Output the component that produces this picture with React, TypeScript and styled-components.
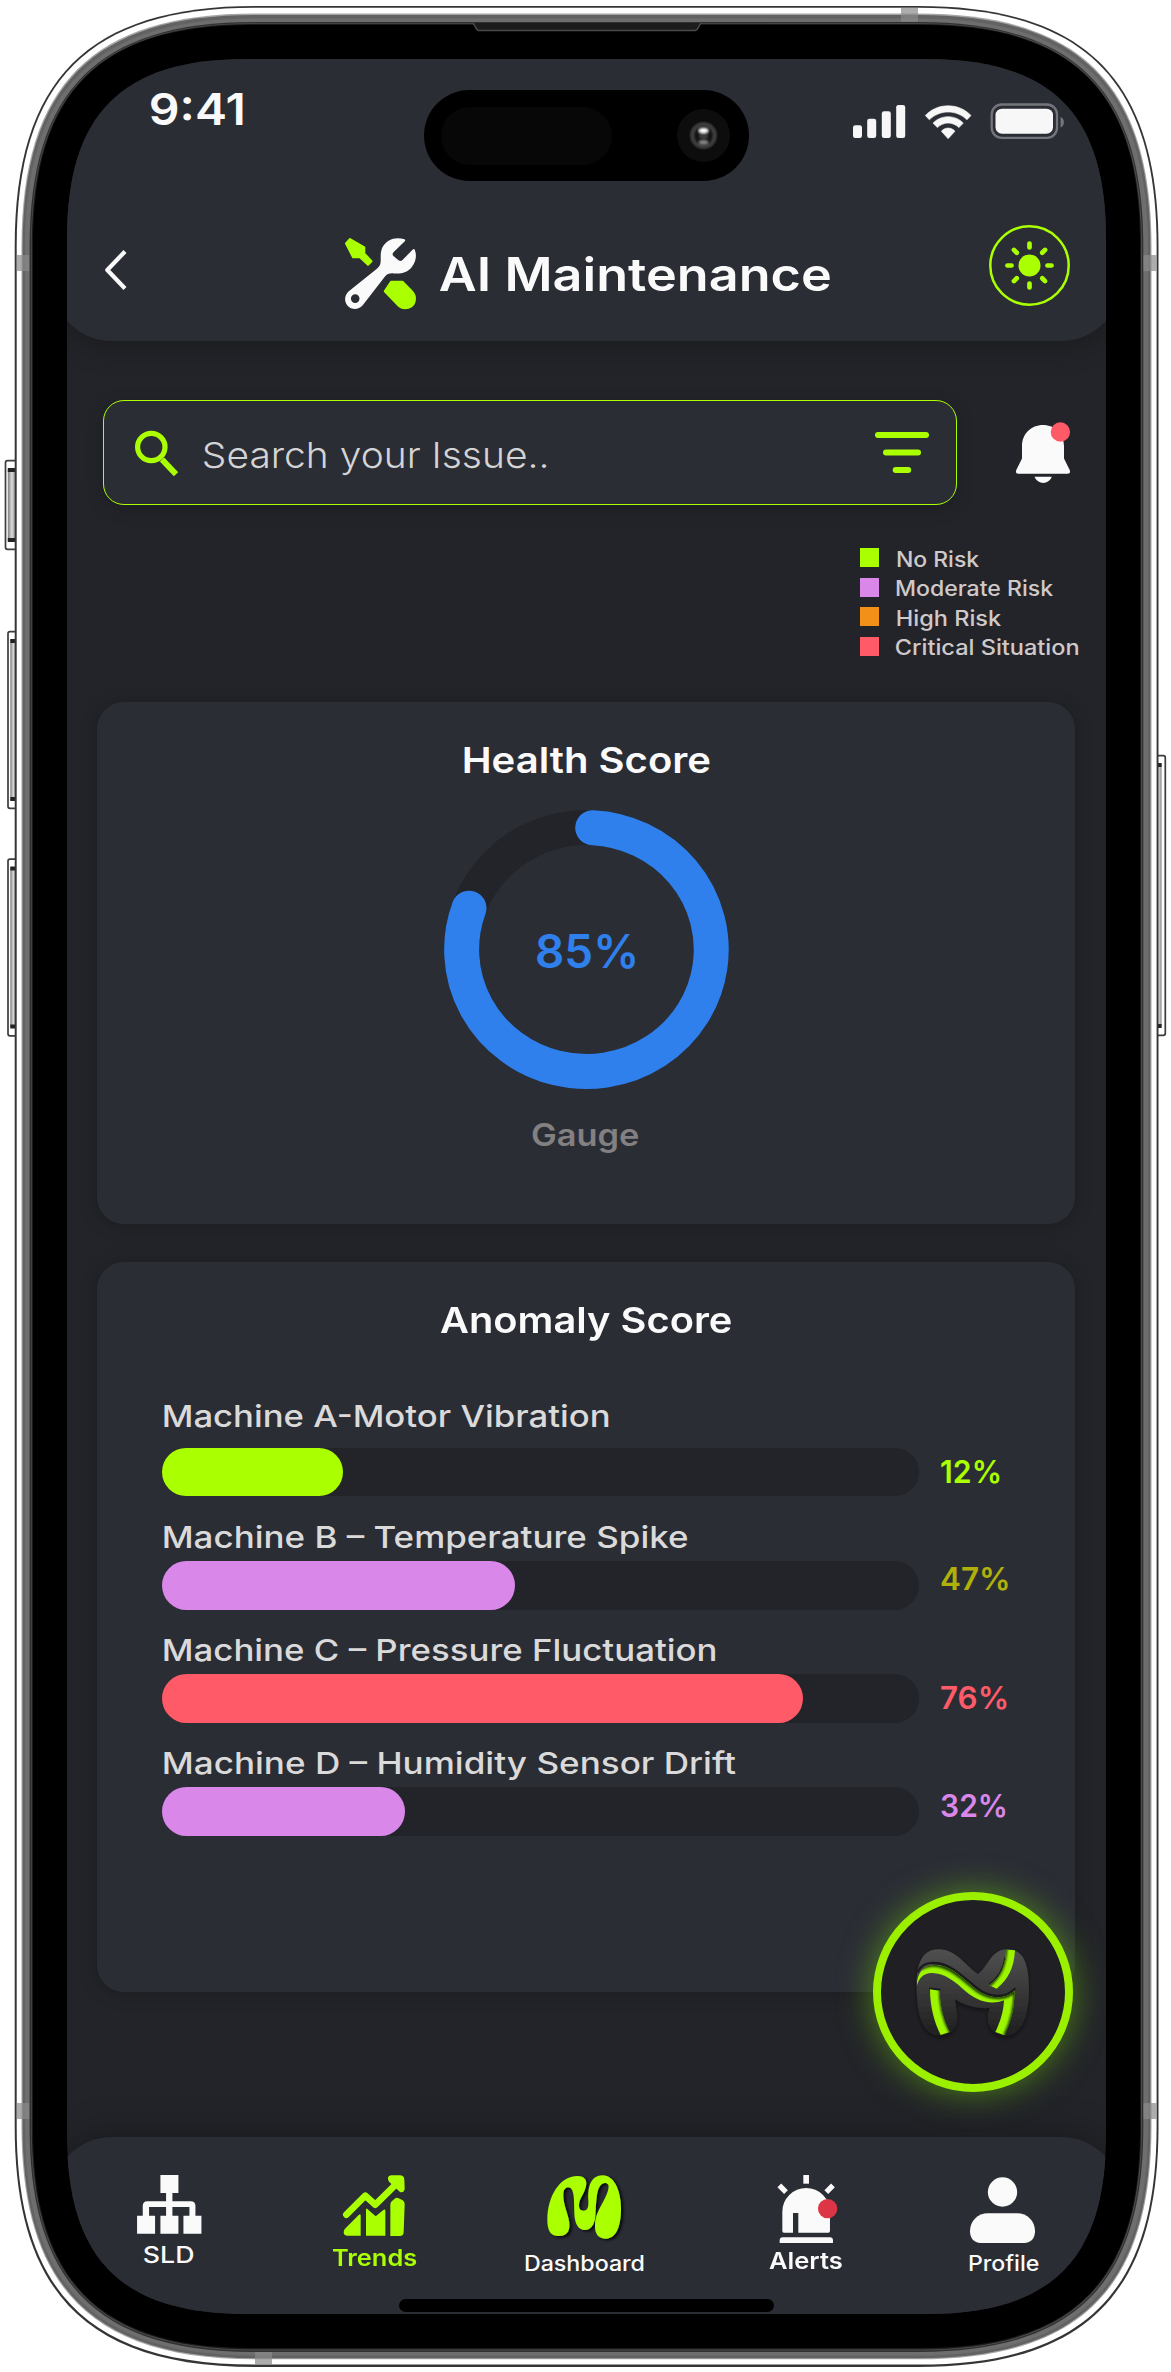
import React, { useLayoutEffect, useRef, useState } from "react";
import styled, { createGlobalStyle } from "styled-components";

const lime = "#aaff00";
const panel = "#2b2d35";
const ground = "#232429";
const paper = "#fafafa";
const coral = "#ff5a68";
const orchid = "#da87ea";

const GlobalStyle = createGlobalStyle`
  *, *::before, *::after { box-sizing: border-box; }
  body { margin: 0; background: #fff; font-family: Inter, "Liberation Sans", sans-serif; }
  svg { display: block; flex: none; overflow: visible; }
`;

/* Rounded rectangle with continuous (smoothed) corners. */
function smoothRect(x: number, y: number, r: number, b: number, radius: number) {
  const e = radius * 1.22;
  const c = radius * 0.373;
  return [
    `M${x + e},${y}`,
    `H${r - e}C${r - c},${y} ${r},${y + c} ${r},${y + e}`,
    `V${b - e}C${r},${b - c} ${r - c},${b} ${r - e},${b}`,
    `H${x + e}C${x + c},${b} ${x},${b - c} ${x},${b - e}`,
    `V${y + e}C${x},${y + c} ${x + c},${y} ${x + e},${y}Z`,
  ].join("");
}

/* ---------- text ---------- */

const TextBox = styled.span<{ $w: number; $size: number; $weight: number; $color: string; $lh: number }>`
  display: block;
  flex: none;
  width: ${(p) => p.$w}px;
  height: ${(p) => p.$lh}px;
  line-height: ${(p) => p.$lh}px;
  font-size: ${(p) => p.$size}px;
  font-weight: ${(p) => p.$weight};
  color: ${(p) => p.$color};
  white-space: nowrap;
`;

const TextRun = styled.span`
  display: inline-block;
  transform-origin: 0 50%;
`;

type TextProps = {
  children: string;
  w: number;
  size: number;
  weight?: number;
  color?: string;
  lh?: number;
};

/* Sets a line of text so that its ink spans exactly `w` pixels. */
function Text({ children, w, size, weight = 500, color = paper, lh = 40 }: TextProps) {
  const ref = useRef<HTMLSpanElement>(null);
  const [fit, setFit] = useState<{ shift: number; scale: number }>({ shift: 0, scale: 1 });
  useLayoutEffect(() => {
    const ctx = document.createElement("canvas").getContext("2d");
    if (!ref.current || !ctx) return;
    const cs = getComputedStyle(ref.current);
    ctx.font = `${cs.fontWeight} ${cs.fontSize} ${cs.fontFamily}`;
    const m = ctx.measureText(children);
    const scale = w / (m.actualBoundingBoxLeft + m.actualBoundingBoxRight);
    setFit({ shift: m.actualBoundingBoxLeft * scale, scale });
  }, [children, w, size, weight]);
  return (
    <TextBox $w={w} $size={size} $weight={weight} $color={color} $lh={lh}>
      <TextRun ref={ref} style={{ transform: `translateX(${fit.shift}px) scaleX(${fit.scale})` }}>
        {children}
      </TextRun>
    </TextBox>
  );
}

/* ---------- device ---------- */

const Device = styled.main`
  position: relative;
  width: 1171px;
  height: 2372px;
  padding: 59px 65px 0 67px;
  overflow: hidden;
  background: #fff;
`;

const Hardware = styled.svg`
  position: absolute;
  inset: 0;
`;

const Screen = styled.div`
  position: relative;
  display: flex;
  flex-direction: column;
  width: 1039px;
  height: 2255px;
  background: ${ground};
  clip-path: path("${smoothRect(0, 0, 1039, 2255, 147)}");
`;

const Island = styled.div`
  position: absolute;
  top: 31px;
  left: 356.5px;
  width: 325.5px;
  height: 91px;
  display: flex;
  align-items: center;
  justify-content: space-between;
  padding: 0 19px 0 17px;
  border-radius: 46px;
  background: #000;
`;

const Sensor = styled.div`
  width: 171px;
  height: 58px;
  border-radius: 29px;
  background: #070707;
`;

const HomeBar = styled.div`
  position: absolute;
  left: 332px;
  bottom: 1.8px;
  width: 375px;
  height: 13.5px;
  border-radius: 7px;
  background: #000;
`;

function SideButton({ x, y, w, h, flip }: { x: number; y: number; w: number; h: number; flip?: boolean }) {
  const keyX = flip ? x : x + 3;
  const keyW = w - 3;
  return (
    <g>
      <rect x={x + 0.7} y={y + 0.7} width={w} height={h - 1.4} rx="2" fill="#fff" stroke="#3c3c3c" strokeWidth="1.7" />
      <rect x={keyX} y={y + 9} width={keyW} height={h - 18} fill="url(#key)" />
      <rect x={keyX} y={y + 8} width={keyW} height="4" fill="#222" />
      <rect x={keyX} y={y + h - 12} width={keyW} height="4" fill="#222" />
    </g>
  );
}

function Frame() {
  return (
    <Hardware width="1171" height="2372" viewBox="0 0 1171 2372">
      <defs>
        <linearGradient id="key" x1="0" x2="1" y1="0" y2="0">
          <stop offset="0" stopColor="#7c7c7c" />
          <stop offset="0.5" stopColor="#dadada" />
          <stop offset="1" stopColor="#8a8a8a" />
        </linearGradient>
      </defs>
      <SideButton x={4.8} y={460} w={11} h={90} />
      <SideButton x={7.3} y={631} w={9} h={178} />
      <SideButton x={7.3} y={858.5} w={9} h={178} />
      <SideButton x={1155.6} y={755} w={9} h={281} flip />
      <path d={smoothRect(14.7, 6, 1158.5, 2367, 197)} fill="#343636" />
      <path d={smoothRect(16.7, 7.8, 1156.6, 2364.6, 195)} fill="#fff" />
      <path d={smoothRect(21.5, 13.6, 1151.5, 2359.3, 191)} fill="#a5a5a5" />
      <path d={smoothRect(22.6, 15, 1150.4, 2358.2, 190)} fill="#626262" />
      <path d={smoothRect(25, 18.5, 1148, 2355.5, 188)} fill="#6e6e6e" />
      <path d={smoothRect(29.6, 22, 1143.3, 2352, 184)} fill="#303030" />
      <path d={smoothRect(31, 23.2, 1142, 2350.4, 182)} fill="#4d4d4d" />
      <path d={smoothRect(31.8, 24, 1141, 2349.4, 181)} fill="#1b1b1b" />
      <path d={smoothRect(33, 25, 1140, 2348, 179)} fill="#000" />
      <g fill="#8a8a8a" fillOpacity="0.7">
        <rect x="16.7" y="255" width="12.5" height="16" />
        <rect x="1143.5" y="255" width="13" height="16" />
        <rect x="16.7" y="2103" width="12.5" height="16" />
        <rect x="1143.5" y="2103" width="13" height="16" />
        <rect x="901" y="7.8" width="17" height="14" />
        <rect x="255" y="2352" width="17" height="12.6" />
      </g>
      <path d="M472.500 23H701.500C698.500 24 699 30.500 695 30.500H479C475 30.500 475.500 24 472.500 23Z" fill="#1c1c1c" />
      <path d="M472.500 23C475.500 24 475 30.500 479 30.500H695C699 30.500 698.500 24 701.500 23" fill="none" stroke="#4a4a4a" strokeWidth="1.500" />
    </Hardware>
  );
}

const Camera = () => (
  <svg width="53" height="53" viewBox="-26.500 -26.500 53 53">
    <defs>
      <radialGradient id="lens">
        <stop offset="0" stopColor="#4a4a4a" />
        <stop offset="0.5" stopColor="#1a1a1a" />
        <stop offset="0.78" stopColor="#404040" />
        <stop offset="1" stopColor="#242424" />
      </radialGradient>
      <filter id="glint" x="-50%" y="-50%" width="200%" height="200%">
        <feGaussianBlur stdDeviation="0.900" />
      </filter>
    </defs>
    <circle r="26.500" fill="#0d0d0d" />
    <circle r="14" fill="url(#lens)" />
    <g filter="url(#glint)">
      <rect x="-7.500" y="-8" width="15" height="16.500" rx="7" fill="#111" />
      <circle r="4.500" fill="#3a3a3a" />
      <ellipse cy="-5" rx="4.500" ry="2.400" fill="#fff" />
      <ellipse cy="7" rx="4.500" ry="2" fill="#8a8a8a" />
    </g>
  </svg>
);

/* ---------- header ---------- */

const Header = styled.header`
  flex: none;
  height: 281.5px;
  margin: 0 -15px;
  border-radius: 0 0 60px 60px;
  background: ${panel};
  box-shadow: 0 4px 30px rgba(0, 0, 0, 0.28);
`;

const StatusRow = styled.div`
  display: flex;
  align-items: flex-start;
  height: 166px;
  padding: 30px 56px 0 99px;
`;

const StatusIcons = styled.div`
  display: flex;
  align-items: flex-start;
  margin: 14px 0 0 auto;
`;

const TitleRow = styled.div`
  display: flex;
  align-items: center;
  height: 81px;
  padding: 0 51px 0 53px;
`;

const Back = styled.div`
  padding-top: 8px;
`;

const Heading = styled.h1`
  display: flex;
  align-items: center;
  gap: 24px;
  margin: 16px auto 0 218px;
`;

const StatusGlyphs = () => (
  <svg width="212" height="36" viewBox="853 103 212 36" fill="#f7f7f7">
    <rect x="853" y="125.300" width="9" height="12.700" rx="2.300" />
    <rect x="867.200" y="118.700" width="9" height="19.300" rx="2.300" />
    <rect x="881.800" y="111.300" width="9" height="26.700" rx="2.300" />
    <rect x="896.200" y="105" width="9" height="33" rx="2.300" />
    <path d="M925.300 115.500C937.500 102.500 958.800 102.500 971 115.500L967 119.800C956.500 109.500 939.800 109.500 929.300 119.800ZM933 123C941.500 114.500 954.800 114.500 963.300 123L959 127.600C952.500 121.600 943.800 121.600 937.300 127.600ZM941.300 131.200C945.200 127 951.200 127 955 131.200L948.100 138.700Z" stroke="#f7f7f7" strokeWidth="0.600" strokeLinejoin="round" />
    <rect x="991.700" y="104.500" width="65.300" height="33.300" rx="10" fill="none" stroke="#74757a" strokeWidth="2.300" />
    <path d="M1060.500 117V127.500C1065 126 1065 118.500 1060.500 117Z" fill="#74757a" />
    <rect x="995.500" y="108.700" width="57.500" height="25" rx="6.500" />
  </svg>
);

const BackIcon = () => (
  <svg width="22" height="40" viewBox="0 0 22 40" fill="none" stroke={paper} strokeWidth="4.200" strokeLinejoin="round">
    <path d="M20 1.500L2.300 20L20 38.500" />
  </svg>
);

const ToolsIcon = () => (
  <svg width="71" height="71" viewBox="0 0 71 71">
    <g fill={lime} stroke={lime} strokeWidth="2" strokeLinejoin="round">
      <path d="M5 1L19.300 9.300V15.500L26.500 23.200L23 26.700L15 19.300L8 19.200L1 5.500Z" />
      <path d="M46 43.700H57.500L67 53.500C72 59 70.500 67.500 63.500 69.800C58.500 71 55 69.500 52.500 66.500L39.700 53.300Z" />
    </g>
    <path
      fillRule="evenodd"
      fill={paper}
      d="M59.500 1.200C54 -.5 48.500 -.2 44 2.500C37.500 6.500 35.700 12 35.700 18.500V22.500C35.700 26 34.800 28.300 32.200 30.600L3.500 53.500C-1.500 58.500-.7 65.500 4 69C8.500 72.300 14 71.300 17.500 67.500L39.800 38.800C42 36 44.500 35.200 48.500 35.400C56.500 36 62.500 34.500 66.800 29C71 23.500 72 17.500 69.800 11.800C69.200 10.800 68.500 10.900 67.800 11.600L57.200 22.200C56.200 23.200 55 23.200 53.500 22.300L49 18.500C47.200 17 47.200 15.500 48.700 14L59.800 3.200C60.500 2.400 60.300 1.500 59.500 1.200ZM10.200 56.300A4.300 4.300 0 1 0 10.200 64.900A4.300 4.300 0 1 0 10.200 56.300Z"
    />
  </svg>
);

const SunIcon = () => (
  <svg width="81" height="81" viewBox="-40.500 -40.500 81 81" stroke={lime} fill="none">
    <circle r="39.200" strokeWidth="2.500" />
    <circle r="11" fill={lime} stroke="none" />
    {[0, 45, 90, 135, 180, 225, 270, 315].map((a) => (
      <path key={a} d="M0 -18V-22" strokeWidth="4.700" strokeLinecap="round" transform={`rotate(${a})`} />
    ))}
  </svg>
);

/* ---------- search & legend ---------- */

const SearchRow = styled.section`
  flex: none;
  display: flex;
  align-items: center;
  margin-top: 59.5px;
  padding: 0 36px;
  justify-content: space-between;
`;

const SearchField = styled.div`
  display: flex;
  align-items: center;
  width: 854px;
  height: 105px;
  padding: 0 27px 0 31px;
  border: 1.5px solid ${lime};
  border-radius: 21px;
  background: ${panel};
  box-shadow: 0 4px 18px rgba(0, 0, 0, 0.16);
`;

const Placeholder = styled.div`
  margin: 4px auto 0 25px;
`;

const SearchIcon = () => (
  <svg width="44" height="46" viewBox="0 0 44 46" fill="none" stroke={lime}>
    <circle cx="16.300" cy="17" r="13.700" strokeWidth="5.200" />
    <path d="M27 29.500L41 44.300" strokeWidth="6" />
  </svg>
);

const FilterIcon = () => (
  <svg width="54" height="41" viewBox="0 0 54 41" fill={lime}>
    <rect width="54" height="6" rx="3" />
    <rect x="8" y="17.500" width="38" height="6" rx="3" />
    <rect x="17.700" y="35" width="18.500" height="6" rx="3" />
  </svg>
);

const BellIcon = () => (
  <svg width="54" height="61" viewBox="1016 421 54 61" fill={paper}>
    <path d="M1043 424C1031 424 1022 433 1022 445V457.500L1016.300 469C1015.500 471.500 1016.300 472.700 1018.500 472.700H1067.500C1069.800 472.700 1070.500 471.500 1069.700 469L1064 457.500V445C1064 433 1055 424 1043 424Z" />
    <path d="M1034.500 475.800H1051.800C1048.500 484 1038 484 1034.500 475.800Z" />
    <circle cx="1060.400" cy="431" r="9.700" fill={coral} />
  </svg>
);

const Legend = styled.ul`
  flex: none;
  display: grid;
  grid-auto-rows: 29.6px;
  margin: 43px 0 35.3px 792.5px;
  padding: 0;
  list-style: none;
`;

const LegendItem = styled.li`
  display: flex;
  align-items: flex-start;
`;

const Swatch = styled.i<{ $color: string; $gap: number }>`
  width: 19px;
  height: 19px;
  margin-right: ${(p) => p.$gap}px;
  background: ${(p) => p.$color};
`;

const LegendLabel = styled.div`
  padding-top: 0.7px;
`;

/* ---------- cards ---------- */

const Card = styled.section<{ $h: number }>`
  flex: none;
  display: flex;
  flex-direction: column;
  align-items: center;
  width: 978px;
  height: ${(p) => p.$h}px;
  margin: 0 0 38px 30.3px;
  padding-top: 33px;
  border-radius: 27px;
  background: ${panel};
  box-shadow: 0 2px 18px rgba(0, 0, 0, 0.22);
`;

const CardTitle = styled.h2<{ $nudge: number }>`
  margin: 0;
  padding-right: ${(p) => p.$nudge}px;
`;

const GaugeDial = styled.div`
  display: grid;
  place-items: center;
  width: 285px;
  height: 279px;
  margin: 25px 0 26.5px;

  & > * {
    grid-area: 1 / 1;
  }
`;

const GaugeValue = styled.div`
  padding-top: 4px;
`;

const GaugeCaption = styled.div`
  padding-right: 1.5px;
`;

const GaugeRing = () => (
  <svg width="285" height="279" viewBox="-142.500 -139.500 285 279" fill="none" strokeWidth="35">
    <ellipse rx="124.800" ry="122" stroke={ground} />
    <path d="M6.200 -121.850A124.800 122 0 1 1 -117.500 -41.300" stroke="#2f80ed" strokeLinecap="round" />
  </svg>
);

const Machines = styled.div`
  display: flex;
  flex-direction: column;
  gap: 20.3px;
  width: 100%;
  margin-top: 51px;
  padding-left: 65px;
`;

const Machine = styled.div<{ $gap: number }>`
  display: flex;
  flex-direction: column;
  gap: ${(p) => p.$gap}px;
`;

const MachineName = styled.div`
  padding-left: 2px;
`;

const Meter = styled.div`
  display: flex;
  align-items: center;
  gap: 21.5px;
  height: 48.5px;
`;

const Track = styled.div`
  width: 757px;
  height: 48.5px;
  border-radius: 25px;
  background: ${ground};
`;

const Fill = styled.div<{ $w: number; $color: string }>`
  width: ${(p) => p.$w}px;
  height: 100%;
  border-radius: 25px;
  background: ${(p) => p.$color};
`;

const Reading = styled.div<{ $lift: number }>`
  padding-bottom: ${(p) => p.$lift * 2}px;
`;

const machines = [
  { name: "Machine A-Motor Vibration", w: 445, gap: 12, bar: 180.5, color: lime, pct: "12%", pctW: 58.5, pctColor: lime, lift: 0 },
  { name: "Machine B – Temperature Spike", w: 523.5, gap: 4.3, bar: 353, color: orchid, pct: "47%", pctW: 67, pctColor: "#b0b00c", lift: 6 },
  { name: "Machine C – Pressure Fluctuation", w: 552, gap: 4.3, bar: 641, color: coral, pct: "76%", pctW: 65.5, pctColor: coral, lift: 0 },
  { name: "Machine D – Humidity Sensor Drift", w: 571.5, gap: 4.3, bar: 242.6, color: orchid, pct: "32%", pctW: 64.5, pctColor: orchid, lift: 5.5 },
];

const legend = [
  { label: "No Risk", w: 82.5, gap: 18.5, color: lime },
  { label: "Moderate Risk", w: 157.5, gap: 17.5, color: orchid },
  { label: "High Risk", w: 104.5, gap: 18.3, color: "#f29018" },
  { label: "Critical Situation", w: 183, gap: 17.5, color: coral },
];

/* ---------- floating assistant button ---------- */

const Assistant = styled.button`
  position: absolute;
  left: 806px;
  top: 1833px;
  display: grid;
  place-items: center;
  width: 200px;
  height: 200px;
  padding: 0;
  border: 8.5px solid #9bf000;
  border-radius: 50%;
  background: #201f24;
  box-shadow: 0 0 34px rgba(120, 230, 0, 0.5);
`;

const AssistantLogo = () => (
  <svg width="183" height="183" viewBox="126 121 549 549">
    <defs>
      <linearGradient id="steel" x1="0" x2="0" y1="0" y2="1">
        <stop offset="0" stopColor="#505050" />
        <stop offset="1" stopColor="#1f1f1f" />
      </linearGradient>
      <clipPath id="ribbon">
        <path d="M230 377C231 333 252 313 285 313C340 313 378 366 420 394C457 417 502 415 523 389C525 440 512 487 493 524L466 514C480 487 491 450 492 419C447 436 405 418 368 384C330 348 300 337 275 337C251 338 237 350 230 377Z" />
        <path d="M498 267L525 269C522 322 505 356 470 384L447 374C484 349 496 312 498 267Z" />
        <path d="M270 386L299 390C300 440 312 480 329 514L302 523C284 487 270 440 270 386Z" />
      </clipPath>
      <filter id="soft" x="-20%" y="-20%" width="140%" height="140%">
        <feGaussianBlur stdDeviation="3.500" />
      </filter>
      <filter id="drop" x="-20%" y="-20%" width="140%" height="140%">
        <feDropShadow dx="0" dy="6" stdDeviation="7" floodColor="#000" floodOpacity="0.5" />
      </filter>
    </defs>
    <path
      filter="url(#drop)"
      fill="url(#steel)"
      d="M230 375C228 307 249 266 296 266C351 266 382 322 414 340C444 320 452 266 502 266C555 266 567 318 567 390C567 452 549 525 499 525C461 525 441 501 444 464L448 442C410 445 374 434 345 416L351 464C355 501 333 525 299 525C247 525 230 462 230 375Z"
    />
    <path d="M232 335C245 309 263 305 285 307C343 310 382 365 423 391C460 413 503 411 526 383" fill="none" stroke="#1a191d" strokeWidth="7" />
    <path d="M268 384L301 388" stroke="#1a191d" strokeWidth="7" />
    <path d="M447 372C478 350 491 325 496 290" fill="none" stroke="#1a191d" strokeWidth="5" />
    <g clipPath="url(#ribbon)">
      <rect x="220" y="260" width="320" height="270" fill="#9df500" />
      <g fill="none" stroke="#1f4300" filter="url(#soft)">
        <path d="M240 322C262 309 280 309 290 311C343 319 380 364 420 392C457 415 502 413 526 385" strokeWidth="16" />
        <path d="M496 262C494 312 481 345 443 376" strokeWidth="13" />
        <path d="M303 384C302 440 315 480 334 516" strokeWidth="14" />
        <path d="M527 392C528 440 515 487 496 526" strokeWidth="14" />
      </g>
    </g>
  </svg>
);

/* ---------- tab bar ---------- */

const TabBar = styled.nav`
  flex: none;
  display: flex;
  align-items: flex-start;
  height: 176.7px;
  margin: auto -15px 0;
  padding: 37.7px 0 0;
  border-radius: 60px 60px 0 0;
  background: ${panel};
  box-shadow: 0 -4px 36px rgba(0, 0, 0, 0.28);
`;

const Tab = styled.a<{ $lead: number; $w: number; $gap: number }>`
  display: flex;
  flex-direction: column;
  align-items: center;
  gap: ${(p) => p.$gap}px;
  width: ${(p) => p.$w}px;
  margin-left: ${(p) => p.$lead}px;
`;

const TabIcon = styled.div<{ $shift: number }>`
  margin-left: ${(p) => p.$shift * 2}px;
`;

const SldIcon = () => (
  <svg width="64.500" height="58.700" viewBox="413 345 193 176" fill={paper}>
    <path d="M483 345h54v54h-18v25h55q14 0 14 14v29h18v54h-54v-54h18v-26h-51v26h18v54h-54v-54h17v-26h-51v26h18v54h-54v-54h17v-29q0-14 14-14h56v-25h-17z" />
  </svg>
);

const TrendsIcon = () => (
  <svg width="61.700" height="61" viewBox="1028 347 185 183" fill={lime}>
    <path d="M1038 466L1095 409L1125 436L1192 370" fill="none" stroke={lime} strokeWidth="20" strokeLinecap="round" strokeLinejoin="round" />
    <path d="M1172 348H1198Q1212 348 1212 362L1213 388Q1211 401 1199 398L1166 367Q1157 351 1172 348Z" />
    <path d="M1075 467Q1081 461 1081 469V529H1040Q1030 529 1030 519Q1030 512 1034 508Z" />
    <path d="M1097 451Q1097 445 1102 450L1126 471L1149 452Q1155 448 1155 455V529H1097Z" />
    <path d="M1170 436Q1170 429 1175 425L1183 418Q1189 413 1195 417L1207 423Q1213 427 1213 434L1210 517Q1210 530 1198 530H1170Z" />
  </svg>
);

const DashboardIcon = () => (
  <svg width="74" height="63.700" viewBox="291 225 222 191">
    <defs>
      <filter id="cast" x="-20%" y="-20%" width="140%" height="140%">
        <feDropShadow dx="7" dy="4" stdDeviation="4" floodColor="#000" floodOpacity="0.85" />
      </filter>
    </defs>
    <path
      filter="url(#cast)"
      fill={lime}
      d="M292 360C292 288 330 228 382 228C405 228 413 242 407 262C401 285 387 297 387 316C387 328 392 332 400 332C413 332 416 322 415 300C413 260 423 226 458 226C492 226 513 272 513 325C513 380 498 416 468 416C445 416 435 401 435 380C435 347 447 329 461 302C473 279 478 262 475 254C469 245 453 248 446 265C438 285 438 320 436 347C434 376 421 390 404 390C385 390 374 372 373 340C372 300 373 278 363 265C353 258 342 264 340 278C338 305 349 330 355 353C363 385 357 408 326 408C301 408 292 391 292 360Z"
    />
  </svg>
);

const AlertsIcon = () => (
  <svg width="59.300" height="68" viewBox="177 345 178 204" fill={paper}>
    <rect x="253" y="345" width="17" height="26" />
    <path d="M181 376L201 396M342 376L322 396" stroke={paper} strokeWidth="16" />
    <path d="M190 513V455A71.500 71 0 0 1 333 455V513Q333 518 328 518H238V459H222V518H195Q190 518 190 513Z" />
    <path d="M182 549V541Q182 532 191 532H333Q342 532 342 541V549Z" />
    <circle cx="326" cy="446" r="29" fill="#dc3545" />
  </svg>
);

const ProfileIcon = () => (
  <svg width="65" height="68" viewBox="750 345 195 204" fill={paper}>
    <circle cx="847.500" cy="396" r="44" />
    <path d="M750 514C750 483 773 460 804 460H891C922 460 945 483 945 514C945 535 933 549 913 549H782C762 549 750 535 750 514Z" />
  </svg>
);

const tabs = [
  { label: "SLD", icon: <SldIcon />, lead: 81.5, w: 70, gap: 9.6, shift: 0.5, textW: 49, size: 22.5, weight: 550, color: paper },
  { label: "Trends", icon: <TrendsIcon />, lead: 126, w: 90, gap: 9.6, shift: -0.5, textW: 84.5, size: 23, weight: 600, color: lime },
  { label: "Dashboard", icon: <DashboardIcon />, lead: 105, w: 120, gap: 13.5, shift: -0.5, textW: 119, size: 20.800, weight: 550, color: paper },
  { label: "Alerts", icon: <AlertsIcon />, lead: 122.5, w: 76, gap: 5.700, shift: 3, textW: 73, size: 23, weight: 600, color: paper },
  { label: "Profile", icon: <ProfileIcon />, lead: 123.5, w: 74, gap: 9, shift: -1, textW: 70, size: 21, weight: 550, color: paper },
];

export default function App() {
  return (
    <Device>
      <GlobalStyle />
      <Frame />
      <Screen>
        <Header>
          <StatusRow>
            <Text w={92} size={44} weight={560}>9:41</Text>
            <StatusIcons>
              <StatusGlyphs />
            </StatusIcons>
          </StatusRow>
          <TitleRow>
            <Back>
              <BackIcon />
            </Back>
            <Heading>
              <ToolsIcon />
              <Text w={390.5} size={46} weight={560} lh={56}>AI Maintenance</Text>
            </Heading>
            <SunIcon />
          </TitleRow>
        </Header>

        <SearchRow>
          <SearchField>
            <SearchIcon />
            <Placeholder>
              <Text w={342} size={36} weight={300} color="#d4d4d4" lh={44}>Search your Issue..</Text>
            </Placeholder>
            <FilterIcon />
          </SearchField>
          <BellIcon />
        </SearchRow>

        <Legend>
          {legend.map((l) => (
            <LegendItem key={l.label}>
              <Swatch $color={l.color} $gap={l.gap} />
              <LegendLabel>
                <Text w={l.w} size={20.8} weight={550} color="#cfc9c9" lh={22}>{l.label}</Text>
              </LegendLabel>
            </LegendItem>
          ))}
        </Legend>

        <Card $h={522.3}>
          <CardTitle $nudge={0}>
            <Text w={245.5} size={36} weight={580} lh={50}>Health Score</Text>
          </CardTitle>
          <GaugeDial>
            <GaugeRing />
            <GaugeValue>
              <Text w={98} size={46} weight={580} color="#2f80ed" lh={50}>85%</Text>
            </GaugeValue>
          </GaugeDial>
          <GaugeCaption>
            <Text w={107} size={31} weight={580} color="#828080">Gauge</Text>
          </GaugeCaption>
        </Card>

        <Card $h={729.7}>
          <CardTitle $nudge={2.5}>
            <Text w={291} size={36} weight={580} lh={50}>Anomaly Score</Text>
          </CardTitle>
          <Machines>
            {machines.map((m) => (
              <Machine key={m.name} $gap={m.gap}>
                <MachineName>
                  <Text w={m.w} size={30.5} weight={540} color="#dadada">{m.name}</Text>
                </MachineName>
                <Meter>
                  <Track>
                    <Fill $w={m.bar} $color={m.color} />
                  </Track>
                  <Reading $lift={m.lift}>
                    <Text w={m.pctW} size={31.5} weight={620} color={m.pctColor}>{m.pct}</Text>
                  </Reading>
                </Meter>
              </Machine>
            ))}
          </Machines>
        </Card>

        <TabBar>
          {tabs.map((t) => (
            <Tab key={t.label} $lead={t.lead} $w={t.w} $gap={t.gap}>
              <TabIcon $shift={t.shift}>{t.icon}</TabIcon>
              <Text w={t.textW} size={t.size} weight={t.weight} color={t.color} lh={24}>{t.label}</Text>
            </Tab>
          ))}
        </TabBar>

        <Assistant aria-label="Assistant">
          <AssistantLogo />
        </Assistant>
        <Island>
          <Sensor />
          <Camera />
        </Island>
        <HomeBar />
      </Screen>
    </Device>
  );
}
